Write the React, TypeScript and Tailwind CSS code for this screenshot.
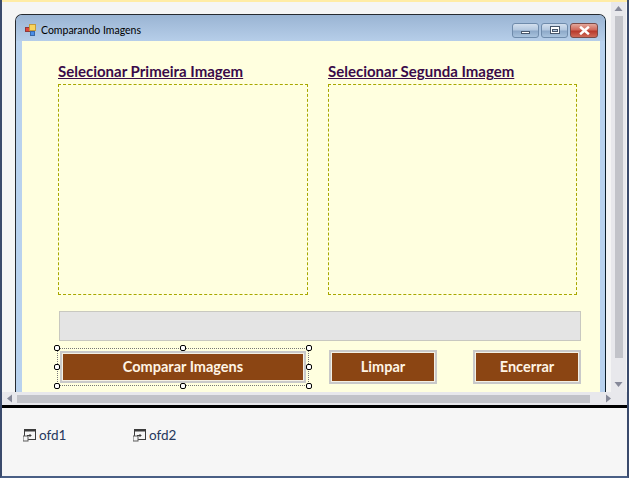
const ui = { fontFamily: '"Open Sans", "Noto Sans", sans-serif' };

function Arrow({ d }: { d: string }) {
  return (
    <svg width="9" height="9" viewBox="0 0 9 9" className="block shrink-0">
      <path d={d} fill="#868999" />
    </svg>
  );
}

function CaptionButton({ kind }: { kind: "min" | "max" | "close" }) {
  const bg =
    kind === "close"
      ? "w-[28px] border-[#7a4a48] bg-[linear-gradient(#e3a79c_0%,#d0685a_45%,#b8392c_55%,#cf6a58_100%)]"
      : "w-[27px] border-[#6f8bab] bg-[linear-gradient(#d3dfee_0%,#b4c8df_45%,#8da9c9_55%,#a9c3dd_100%)]";
  return (
    <div className={`h-[15px] rounded-[3px] border flex items-center justify-center ${bg}`}>
      {kind === "min" && <div className="w-[9px] h-[3px] mt-[4px] bg-white border border-[#47566b]" />}
      {kind === "max" && (
        <div className="w-[10px] h-[8px] bg-white border border-[#47566b] flex items-center justify-center">
          <div className="w-[6px] h-[3px] mt-[1px] bg-[#b4c8df] border border-[#47566b]" />
        </div>
      )}
      {kind === "close" && (
        <svg width="11" height="9" viewBox="0 0 11 9">
          <path d="M2 1.5 L9 7.5 M9 1.5 L2 7.5" stroke="#fff" strokeWidth="2.4" strokeLinecap="square" />
        </svg>
      )}
    </div>
  );
}

function AppIcon() {
  return (
    <svg width="12" height="12" viewBox="0 0 12 12" className="block shrink-0">
      <rect x="0.5" y="3.5" width="4" height="4" fill="#e0453a" stroke="#8e3a3a" />
      <rect x="4.5" y="0.5" width="6" height="6" fill="#f8d45c" stroke="#c49a3a" />
      <rect x="5.5" y="7.5" width="4" height="4" fill="#4a8ee8" stroke="#3a68a8" />
    </svg>
  );
}

function Handle({ className }: { className: string }) {
  return <div className={`absolute w-[6px] h-[6px] rounded-[2px] bg-white border border-black ${className}`} />;
}

function BrownButton({ label, className }: { label: string; className: string }) {
  return (
    <div className={`bg-[#8b4513] border-2 border-[#c9c9c9] shadow-[inset_0_0_0_1px_#f4f0e4] flex items-center justify-center text-[#fff4e4] text-[14.5px] font-bold leading-none font-[Lato] ${className}`}>
      {label}
    </div>
  );
}

function TrayIcon() {
  return (
    <svg width="13" height="13" viewBox="0 0 13 13" className="block shrink-0">
      <rect x="1.5" y="0.5" width="11" height="10" fill="#f6f6f6" stroke="#3c3c3c" />
      <rect x="1.5" y="0.5" width="11" height="2" fill="#3c3c3c" />
      <rect x="0" y="7" width="5" height="5" fill="#f6f6f6" stroke="#5a5a5a" />
      <path d="M4 6.5 L8 6.5 M6.5 5 L8 6.5 L6.5 8" stroke="#3c3c3c" fill="none" />
    </svg>
  );
}

function TrayItem({ label, className }: { label: string; className: string }) {
  return (
    <div className={`flex items-center gap-[3px] ${className}`}>
      <TrayIcon />
      <span className="text-[13.5px] leading-none text-[#26385c] font-[Lato]">{label}</span>
    </div>
  );
}

export default function App() {
  return (
    <div style={ui} className="w-[629px] h-[478px] overflow-hidden flex flex-col bg-[#f5f5f5] border-x-2 border-[#3a4a6c] border-b-2 border-b-[#4a5f85]">
      <div className="h-[2px] shrink-0 -mx-[2px] bg-[#ffeca6]" />
      <div className="flex-1 min-h-0 flex flex-col">
        {/* Designer surface and vertical scrollbar */}
        <div className="h-[390px] shrink-0 flex">
          <div className="w-[609px] shrink-0 pl-[13px] pt-[12px] overflow-hidden">
            <div className="w-[591px] h-[380px] rounded-t-[7px] border border-b-0 border-[#262a30] border-r-[#0c1e2a] bg-[#b9d2ee] flex flex-col overflow-hidden">
              <div className="h-[26px] shrink-0 pl-[9px] pr-[7px] pt-[4px] flex items-center bg-[linear-gradient(#9ab4d3,#b6cee9)]">
                <AppIcon />
                <span className="ml-[4px] text-[10.5px] text-black leading-none font-[Lato]">Comparando Imagens</span>
                <div className="ml-auto flex gap-[2px]">
                  <CaptionButton kind="min" />
                  <CaptionButton kind="max" />
                  <CaptionButton kind="close" />
                </div>
              </div>
              <div className="flex-1 min-h-0 ml-[6px] mr-[5px] bg-[#ffffdf] pl-[36px] pt-[24px] flex flex-col">
                <div className="flex gap-[20px]">
                  <div className="w-[250px]">
                    <div className="h-[19px] text-[15px] font-bold leading-[13px] text-[#3a0a4a] underline font-[Lato]">Selecionar Primeira Imagem</div>
                    <div className="h-[211px] border border-dashed border-[#a8a800]" />
                  </div>
                  <div className="w-[249px]">
                    <div className="h-[19px] text-[15px] font-bold leading-[13px] text-[#3a0a4a] underline font-[Lato]">Selecionar Segunda Imagem</div>
                    <div className="h-[211px] border border-dashed border-[#a8a800]" />
                  </div>
                </div>
                <div className="mt-[16px] ml-[1px] w-[522px] h-[30px] bg-[#e4e4e4] border border-[#c8c8c0]" />
                <div className="mt-[9px] flex items-start">
                  <div className="relative ml-[2px] mt-[1px]">
                    <BrownButton label="Comparar Imagens" className="w-[246px] h-[32px]" />
                    <div className="absolute -left-[3px] -right-[3px] -top-[3px] -bottom-[3px] border border-dotted border-[#777]" />
                    <Handle className="-left-[6px] -top-[6px]" />
                    <Handle className="left-[120px] -top-[6px]" />
                    <Handle className="-right-[6px] -top-[6px]" />
                    <Handle className="-left-[6px] top-[13px]" />
                    <Handle className="-right-[6px] top-[13px]" />
                    <Handle className="-left-[6px] -bottom-[6px]" />
                    <Handle className="left-[120px] -bottom-[6px]" />
                    <Handle className="-right-[6px] -bottom-[6px]" />
                  </div>
                  <BrownButton label="Limpar" className="ml-[23px] w-[108px] h-[34px]" />
                  <BrownButton label="Encerrar" className="ml-[36px] w-[108px] h-[34px]" />
                </div>
              </div>
            </div>
          </div>
          <div className="w-[15px] shrink-0 bg-[#e8e8ec] flex flex-col items-center pt-[2px]">
            <Arrow d="M4.5 2 L8.5 7 L0.5 7 Z" />
            <div className="w-[8px] h-[342px] mt-[3px] bg-[#c2c3c9]" />
            <div className="mt-auto pb-[3px]"><Arrow d="M0.5 2 L8.5 2 L4.5 7 Z" /></div>
          </div>
          <div className="flex-1 bg-[#f5f5f5]" />
        </div>
        {/* Horizontal scrollbar */}
        <div className="h-[13px] shrink-0 bg-[#e8e8ec] flex items-center pl-[3px] pr-[14px]">
          <Arrow d="M2 4.5 L7 0.5 L7 8.5 Z" />
          <div className="w-[573px] h-[8px] ml-[3px] bg-[#c2c3c9]" />
          <div className="ml-auto"><Arrow d="M2 0.5 L7 4.5 L2 8.5 Z" /></div>
        </div>
        <div className="h-[3px] shrink-0 bg-black" />
        {/* Component tray */}
        <div className="flex-1 bg-[#f6f6f6] flex items-start pt-[21px] pl-[21px]">
          <TrayItem label="ofd1" className="w-[110px]" />
          <TrayItem label="ofd2" className="" />
        </div>
      </div>
    </div>
  );
}
